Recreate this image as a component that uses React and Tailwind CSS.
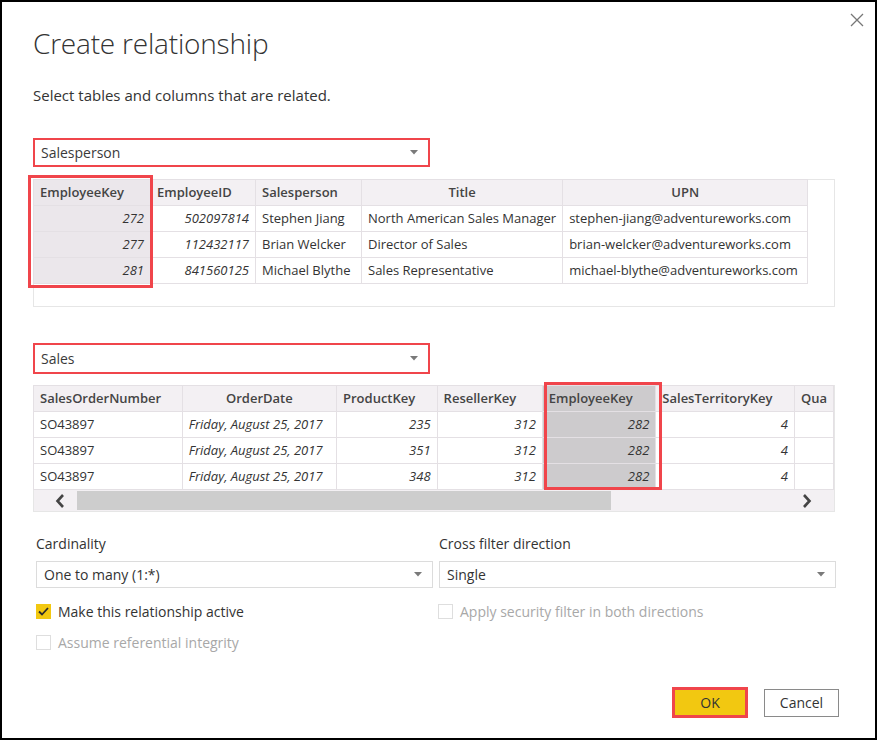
import React from "react";

const RED = "border-[#f0454b]";

function Caret() {
  return (
    <svg width="8" height="5" viewBox="0 0 8 5" className="shrink-0">
      <path d="M0 0 L8 0 L4 4.5 Z" fill="#7a7a7a" />
    </svg>
  );
}

function Chevron({ dir }) {
  return (
    <svg width="10" height="14" viewBox="0 0 10 14">
      {dir === "left" ? (
        <path d="M8 1 L2.5 7 L8 13" fill="none" stroke="#444" strokeWidth="2.6" />
      ) : (
        <path d="M2 1 L7.5 7 L2 13" fill="none" stroke="#444" strokeWidth="2.6" />
      )}
    </svg>
  );
}

function TableSelect({ label, h }) {
  return (
    <div className={`w-[397px] ${h} border-2 ${RED} bg-white flex items-center pl-[6px] pr-[10px]`}>
      <span className="flex-1 text-[14px] text-[#3a3a3a]">{label}</span>
      <Caret />
    </div>
  );
}

function Select({ label }) {
  return (
    <div className="w-full h-[27px] border border-[#dcdcdc] bg-white flex items-center pl-[7px] pr-[10px]">
      <span className="flex-1 text-[14px] text-[#333]">{label}</span>
      <Caret />
    </div>
  );
}

function Check({ checked, disabled, label }) {
  return (
    <div className="flex items-center gap-[7px] h-[16px]">
      {checked ? (
        <div className="w-[15px] h-[15px] bg-[#f2c811] flex items-center justify-center">
          <svg width="11" height="9" viewBox="0 0 11 9">
            <path d="M1 4.5 L4 7.5 L10 1" fill="none" stroke="#2b2b2b" strokeWidth="1.8" />
          </svg>
        </div>
      ) : (
        <div className="w-[15px] h-[15px] border border-[#dedede] bg-white" />
      )}
      <span className={`text-[14px] ${disabled ? "text-[#a8a8a8]" : "text-[#333]"}`}>{label}</span>
    </div>
  );
}

const th = "h-[26px] border border-[#e4e0e4] px-[6px] text-[13px] font-semibold text-[#444] whitespace-nowrap overflow-hidden";
const td = "h-[26px] border border-[#e4e0e4] px-[6px] text-[13px] text-[#333] whitespace-nowrap overflow-hidden";

export default function App() {
  const people = [
    ["272", "502097814", "Stephen Jiang", "North American Sales Manager", "stephen-jiang@adventureworks.com"],
    ["277", "112432117", "Brian Welcker", "Director of Sales", "brian-welcker@adventureworks.com"],
    ["281", "841560125", "Michael Blythe", "Sales Representative", "michael-blythe@adventureworks.com"],
  ];
  const sales = [
    ["SO43897", "Friday, August 25, 2017", "235", "312", "282", "4"],
    ["SO43897", "Friday, August 25, 2017", "351", "312", "282", "4"],
    ["SO43897", "Friday, August 25, 2017", "348", "312", "282", "4"],
  ];
  return (
    <div className="w-[877px] h-[740px] border-2 border-black bg-white relative flex flex-col pl-[31px] pr-[40px] font-['Open_Sans',sans-serif] overflow-hidden">
      <svg className="absolute top-[11px] right-[11px]" width="14" height="14" viewBox="0 0 14 14">
        <path d="M1 1 L13 13 M13 1 L1 13" stroke="#777" strokeWidth="1.3" />
      </svg>

      <h1 className="mt-[24px] h-[34px] text-[28px] leading-[34px] font-light text-[#333] tracking-[-0.2px]">Create relationship</h1>
      <p className="mt-[25px] text-[15px] leading-[20px] text-[#333]">Select tables and columns that are related.</p>

      <div className="mt-[33px]">
        <TableSelect label="Salesperson" h="h-[29px]" />
      </div>

      <div className="mt-[12px] relative w-[802px] h-[128px] border border-[#e6e6e6]">
        <table className="table-fixed border-collapse -ml-px -mt-px">
          <colgroup>
            <col className="w-[117px]" />
            <col className="w-[105px]" />
            <col className="w-[106px]" />
            <col className="w-[201px]" />
            <col className="w-[245px]" />
          </colgroup>
          <thead>
            <tr className="bg-[#f3f0f3]">
              <th className={`${th} text-left bg-[#ebe7eb]`}>EmployeeKey</th>
              <th className={`${th} text-left`}>EmployeeID</th>
              <th className={`${th} text-left`}>Salesperson</th>
              <th className={`${th} text-center`}>Title</th>
              <th className={`${th} text-center`}>UPN</th>
            </tr>
          </thead>
          <tbody>
            {people.map((r, i) => (
              <tr key={i}>
                <td className={`${td} text-right italic bg-[#ebe7eb]`}>{r[0]}</td>
                <td className={`${td} text-right italic`}>{r[1]}</td>
                <td className={td}>{r[2]}</td>
                <td className={td}>{r[3]}</td>
                <td className={td}>{r[4]}</td>
              </tr>
            ))}
          </tbody>
        </table>
        <div className={`absolute left-[-6px] top-[-5px] w-[125px] h-[113px] border-[3px] ${RED}`} />
      </div>

      <div className="mt-[36px]">
        <TableSelect label="Sales" h="h-[31px]" />
      </div>

      <div className="mt-[11px] relative w-[802px] h-[127px] border border-[#e6e6e6] flex flex-col">
        <table className="table-fixed border-collapse -ml-px -mt-px">
          <colgroup>
            <col className="w-[150px]" />
            <col className="w-[155px]" />
            <col className="w-[102px]" />
            <col className="w-[107px]" />
            <col className="w-[115px]" />
            <col className="w-[140px]" />
            <col className="w-[34px]" />
          </colgroup>
          <thead>
            <tr className="bg-[#f3f0f3]">
              <th className={`${th} text-left`}>SalesOrderNumber</th>
              <th className={`${th} text-center`}>OrderDate</th>
              <th className={`${th} text-left`}>ProductKey</th>
              <th className={`${th} text-left`}>ResellerKey</th>
              <th className={`${th} text-left bg-[#cdcbcd]`}>EmployeeKey</th>
              <th className={`${th} text-left`}>SalesTerritoryKey</th>
              <th className={`${th} text-left px-[3px]`}>Qua</th>
            </tr>
          </thead>
          <tbody>
            {sales.map((r, i) => (
              <tr key={i}>
                <td className={td}>{r[0]}</td>
                <td className={`${td} italic`}>{r[1]}</td>
                <td className={`${td} text-right italic`}>{r[2]}</td>
                <td className={`${td} text-right italic`}>{r[3]}</td>
                <td className={`${td} text-right italic bg-[#cdcbcd]`}>{r[4]}</td>
                <td className={`${td} text-right italic`}>{r[5]}</td>
                <td className={td}></td>
              </tr>
            ))}
          </tbody>
        </table>
        <div className="flex-1 bg-[#f3f0f3] flex items-center pl-[21px] pr-[22px]">
          <Chevron dir="left" />
          <div className="ml-[12px] w-[534px] h-[19px] bg-[#cdcdcd]" />
          <div className="flex-1" />
          <Chevron dir="right" />
        </div>
        <div className={`absolute left-[510px] top-[-4px] w-[118px] h-[108px] border-[3px] ${RED}`} />
      </div>

      <div className="mt-[22px] grid grid-cols-[397px_397px] gap-x-[6px] pl-[3px]">
        <div className="flex flex-col">
          <span className="text-[14px] leading-[19px] text-[#333]">Cardinality</span>
          <div className="mt-[8px]"><Select label="One to many (1:*)" /></div>
          <div className="mt-[15px]"><Check checked label="Make this relationship active" /></div>
          <div className="mt-[15px]"><Check disabled label="Assume referential integrity" /></div>
        </div>
        <div className="flex flex-col">
          <span className="text-[14px] leading-[19px] text-[#333]">Cross filter direction</span>
          <div className="mt-[8px]"><Select label="Single" /></div>
          <div className="mt-[15px] -ml-px"><Check disabled label="Apply security filter in both directions" /></div>
        </div>
      </div>

      <div className="flex-1" />
      <div className="flex justify-end items-center gap-[16px] mb-[20px] mr-[-4px]">
        <button className={`w-[76px] h-[31px] border-[3px] ${RED} bg-[#f2c811] text-[14px] text-[#333]`}>OK</button>
        <button className="w-[75px] h-[28px] border border-[#8a8a8a] bg-white text-[14px] text-[#333]">Cancel</button>
      </div>
    </div>
  );
}
